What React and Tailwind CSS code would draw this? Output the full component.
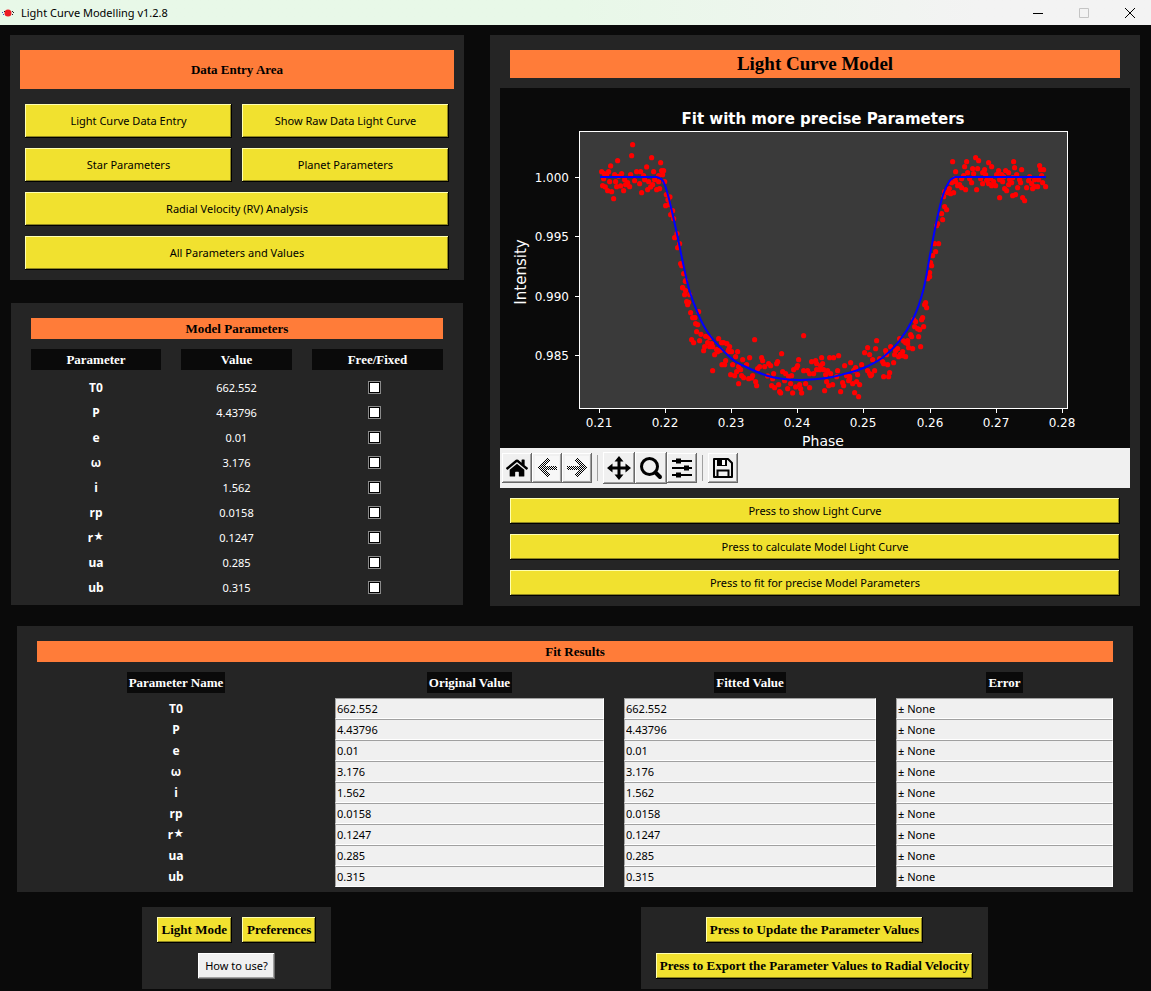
import React, { useState } from "react";
import { FaHome } from "react-icons/fa";

const RAISED_YELLOW =
  "bg-[#f1e12f] text-black shadow-[inset_-1px_-1px_0_#000,inset_1px_1px_0_#ffffb0,inset_-2px_-2px_0_#8f861f]";
const RAISED_GREY =
  "bg-[#f0f0f0] text-black shadow-[inset_-1px_-1px_0_#696969,inset_1px_1px_0_#ffffff,inset_-2px_-2px_0_#a0a0a0]";
const SERIF = "font-['Liberation_Serif',serif] font-bold";

const parameters = [
  ["T0", "662.552"],
  ["P", "4.43796"],
  ["e", "0.01"],
  ["ω", "3.176"],
  ["i", "1.562"],
  ["rp", "0.0158"],
  ["r⋆", "0.1247"],
  ["ua", "0.285"],
  ["ub", "0.315"],
];

// Observed samples, grouped by plot quadrant: origin in plot units, then x,y pairs in thirds of a unit.
const samples = [
  {
    origin: [0, 2],
    points:
      "397,163 394,196 352,211 331,227 454,202 481,217 439,230 304,244 325,244 409,244 421,244 460,244 484,241 490,241 343,253 364,250 391,253 310,265 328,274 346,274 307,286 315,290 322,301 334,304 340,325 349,289 361,287 370,301 376,283 388,289 382,277 403,271 418,280 424,307 433,268 442,298 451,290 457,283 469,298 478,295 475,274 493,274 463,268 445,274 430,256 487,253 475,256 319,253 355,258 373,268 312,250 498,313 509,320 503,328 496,346 505,343 517,361 511,373 520,385 530,430 523,442 538,460 532,472 541,520 544,526 550,550 556,571 547,592",
  },
  {
    origin: [300, 2],
    points:
      "457,214 466,244 499,214 493,229 526,202 535,211 517,235 532,235 565,217 574,229 553,238 502,247 520,250 547,247 490,256 508,265 514,277 484,265 472,286 478,283 484,292 496,298 529,298 466,274 454,277 447,295 460,307 451,310 442,307 433,304 430,319 433,349 439,358 424,370 427,388 412,400 409,406 403,460 415,460 406,484 397,496 391,517 394,526 388,547 388,559 382,565 595,241 589,253 616,241 625,247 640,214 643,232 664,238 649,253 637,262 658,268 661,277 607,274 598,268 586,286 574,286 565,280 559,270 547,280 541,265 556,253 571,265 580,274 604,253 613,295 619,301 625,283 634,277 598,322 637,316 646,313 667,322 673,331 652,292 679,292 688,259 685,271 694,280 697,295 703,289 712,289 703,268 715,268 724,256 718,226 721,238 730,238 727,277 736,289 628,268 610,259 464,264",
  },
  {
    origin: [60, 192],
    points:
      "375,3 367,22 376,31 373,43 388,43 379,64 385,66 382,73 391,97 415,94 397,112 404,112 406,130 412,133 409,154 422,162 394,178 400,187 418,181 436,168 433,199 430,211 448,172 442,187 448,199 457,199 463,223 475,175 484,187 490,187 500,190 508,199 472,214 481,210 469,208 454,190 514,214 532,214 526,229 505,208 503,214 457,271 496,241 485,253 493,253 517,253 547,238 568,232 541,268 535,259 529,274 511,283 523,286 535,310 544,286 550,292 559,253 565,295 577,286 574,293 586,304 589,316 583,178 604,232 607,241 598,259 592,265 613,259 625,250 631,256 622,287 637,295 640,280 634,316 643,322 655,313 652,244 649,250 664,220 658,334 661,338 667,274 676,280 673,301 682,325 691,310 697,338 706,320 685,289 694,286 700,268 712,256 709,262 715,238 730,166 718,313 721,325 724,338 730,271 736,310 748,322 742,271 748,280 754,244 760,280 766,241 769,250 784,232 787,250 778,268 769,268 781,256 790,268 802,271 796,283 808,232 820,232 835,226 799,304 793,331 805,316 817,313 811,280 832,271 829,289 841,334 847,307 850,316 853,256 871,247 859,286 868,295 865,301 877,310 883,337 889,304 895,349 892,283 883,268 880,271 898,313",
  },
  {
    origin: [320, 192],
    points:
      "124,253 133,217 142,202 148,223 166,205 169,181 157,238 142,271 148,280 154,283 151,286 163,271 190,289 205,289 208,277 178,235 190,250 202,253 187,244 196,211 211,199 220,247 223,223 235,229 232,205 238,175 247,214 256,229 247,226 256,187 262,181 265,202 277,205 271,163 274,169 301,199 295,169 283,139 286,124 292,145 298,148 310,139 304,118 307,112 313,73 316,67 319,82 280,118 250,182 262,190 226,211 240,222 199,223 88,289 106,262",
  },
];

const dots = samples.flatMap(({ origin, points }) =>
  points.split(" ").map((pair) => {
    const [x, y] = pair.split(",").map(Number);
    return [origin[0] + x / 3 + 0.3, origin[1] + y / 3 + 0.3];
  }),
);

const model = [
  [100, 89], [157, 89], [163, 93], [168.5, 109], [177, 146], [183, 175], [189.3, 202],
  [197.5, 224.5], [208.5, 245.5], [230.5, 269.7], [244, 278], [267, 287.7], [284, 291], [301, 292], [327, 290],
  [346, 285.5], [363.5, 280], [382, 270], [398.5, 254], [413.5, 230], [423.3, 202], [430, 167],
  [437, 131], [443, 107], [449.5, 93], [455, 89], [546, 89],
];

// Catmull-Rom spline between the straight out-of-transit segments.
function smooth(points) {
  const n = points.length;
  let d = `M${points[0]}L${points[1]}`;
  for (let i = 1; i < n - 2; i++) {
    const p0 = i === 1 ? points[1] : points[i - 1];
    const p1 = points[i];
    const p2 = points[i + 1];
    const p3 = i === n - 3 ? points[i + 1] : points[i + 2];
    const c1 = [p1[0] + (p2[0] - p0[0]) / 6, p1[1] + (p2[1] - p0[1]) / 6];
    const c2 = [p2[0] - (p3[0] - p1[0]) / 6, p2[1] - (p3[1] - p1[1]) / 6];
    d += `C${c1} ${c2} ${p2}`;
  }
  return `${d}L${points[n - 1]}`;
}

const xTicks = [
  [99.5, "0.21"], [165.5, "0.22"], [231.5, "0.23"], [297.5, "0.24"],
  [363.5, "0.25"], [430.5, "0.26"], [496.5, "0.27"], [562.5, "0.28"],
];
const yTicks = [[89.5, "1.000"], [148.5, "0.995"], [208.5, "0.990"], [267.5, "0.985"]];

function Plot() {
  return (
    <svg
      viewBox="0 0 630 360"
      className="block w-full overflow-visible bg-[#0a0a0a] font-['DejaVu_Sans',sans-serif]"
      role="img"
      aria-label="Fit with more precise Parameters"
    >
      <rect x="79.5" y="43.5" width="488" height="277" fill="#3a3a3a" />
      <g fill="#ff0000">
        {dots.map(([x, y], i) => (
          <circle key={i} cx={x} cy={y} r="2.6" />
        ))}
      </g>
      <path d={smooth(model)} fill="none" stroke="#0000ff" strokeWidth="2" />
      <rect x="79.5" y="43.5" width="488" height="277" fill="none" stroke="#fff" />
      <g fill="#fff" fontSize="12">
        {xTicks.map(([x, label]) => (
          <g key={label}>
            <path d={`M${x} 321v4`} stroke="#fff" />
            <text x={x - 0.5} y="339" textAnchor="middle">{label}</text>
          </g>
        ))}
        {yTicks.map(([y, label]) => (
          <g key={label}>
            <path d={`M75 ${y}h4`} stroke="#fff" />
            <text x="69" y={y + 4} textAnchor="end">{label}</text>
          </g>
        ))}
      </g>
      <text x="323" y="36" textAnchor="middle" fontSize="15" fontWeight="bold" fill="#fff">
        Fit with more precise Parameters
      </text>
      <text x="323" y="358" textAnchor="middle" fontSize="14" fill="#fff">Phase</text>
      <text transform="translate(26 184) rotate(-90)" textAnchor="middle" fontSize="15" fill="#fff">
        Intensity
      </text>
    </svg>
  );
}

function DitheredArrow({ id, flip }) {
  return (
    <svg viewBox="0 0 24 24" className="size-6 bg-[#f7f7f7]" shapeRendering="crispEdges" aria-hidden="true">
      <defs>
        <pattern id={id} width="2" height="2" patternUnits="userSpaceOnUse">
          <rect width="1" height="1" fill="#000" />
          <rect x="1" y="1" width="1" height="1" fill="#000" />
        </pattern>
      </defs>
      <path
        d={flip ? "M12 2 22 12 12 22 9 19l5-5H2v-4h12L9 5z" : "M12 2 2 12l10 10 3-3-5-5h12v-4H10l5-5z"}
        fill={`url(#${id})`}
      />
    </svg>
  );
}

function PanIcon() {
  return (
    <svg viewBox="0 0 24 24" className="size-6" aria-hidden="true">
      <path d="M4 12h16M12 4v16" stroke="#000" strokeWidth="3" />
      <path d="M12 0 16.500 5.500h-9zM12 24l4.500-5.500h-9zM0 12l5.500-4.500v9zM24 12l-5.500-4.500v9z" />
    </svg>
  );
}

function SearchIcon() {
  return (
    <svg viewBox="0 0 24 24" className="size-6" fill="none" stroke="#000" aria-hidden="true">
      <circle cx="10.5" cy="10.5" r="8" strokeWidth="3" />
      <path d="m16.500 16.500 4.500 4.500" strokeWidth="4" strokeLinecap="round" />
    </svg>
  );
}

function SlidersIcon() {
  return (
    <svg viewBox="0 0 24 24" className="size-6" aria-hidden="true">
      <path d="M2 5h20M2 12h20M2 19h20" stroke="#000" strokeWidth="2" />
      <path d="M6 2.500h5v5H6zM14 9.500h5v5h-5zM6 16.500h5v5H6z" />
    </svg>
  );
}

function SaveIcon() {
  return (
    <svg viewBox="0 0 24 24" className="size-6" fill="none" stroke="#000" strokeWidth="2" aria-hidden="true">
      <path d="M3 3h14l4 4v14H3z" strokeLinejoin="round" />
      <path d="M6.500 21v-6.500h11V21" />
      <path d="M15 3v7" />
      <path d="M6 3h9v7H6z" fill="#000" stroke="none" />
      <path d="M11 4h3v5h-3z" fill="#fff" stroke="none" />
    </svg>
  );
}

function Tool({ label, large, disabled, children }) {
  return (
    <button
      type="button"
      aria-label={label}
      title={label}
      disabled={disabled}
      className={`flex items-center justify-center ${large ? "size-8" : "size-[30px]"} ${RAISED_GREY}`}
    >
      {children}
    </button>
  );
}

function Toolbar() {
  return (
    <div className="flex h-10 items-center bg-[#f0f0f0] pl-[2px]">
      <Tool label="Home"><FaHome className="size-[22px]" /></Tool>
      <Tool label="Back" disabled><DitheredArrow id="back-dither" /></Tool>
      <Tool label="Forward" disabled><DitheredArrow id="forward-dither" flip /></Tool>
      <span className="mx-[5px] h-[26px] w-px bg-[#a0a0a0]" />
      <Tool label="Pan" large><PanIcon /></Tool>
      <Tool label="Zoom" large><SearchIcon /></Tool>
      <Tool label="Configure subplots"><SlidersIcon /></Tool>
      <span className="mx-[5px] h-[26px] w-px bg-[#a0a0a0]" />
      <Tool label="Save"><SaveIcon /></Tool>
    </div>
  );
}

function Banner({ className, children }) {
  return (
    <h2 className={`flex items-center justify-center bg-[#ff7c39] text-black ${SERIF} ${className}`}>{children}</h2>
  );
}

function Button({ className = "", children }) {
  return (
    <button type="button" className={`${RAISED_YELLOW} ${className}`}>{children}</button>
  );
}

function ParameterName({ name }) {
  if (!name.endsWith("⋆")) return name;
  return (
    <>
      {name.slice(0, -1)}
      <span className="text-[18px] leading-0">⋆</span>
    </>
  );
}

function TitleBar() {
  return (
    <header className="flex h-[25px] items-center bg-linear-to-r from-[#e8f8e8] from-50% to-[#f3f3f3] to-85% text-black">
      <svg viewBox="0 0 16 16" className="ml-[1px] size-4" aria-hidden="true">
        <circle cx="7" cy="8" r="3.500" fill="#ed1c24" />
        <path d="M1 7h1v1H1zM2 9h1v1H2z" fill="#3f48cc" />
        <path d="M3 6h1v1H3zM11 6h1v1h-1zM12 7h1v1h-1zM11 9h1v1h-1z" fill="#222" />
      </svg>
      <h1 className="ml-1 flex-1">Light Curve Modelling v1.2.8</h1>
      <div className="flex gap-[22px] pr-[9px]">
        <button type="button" aria-label="Minimize" className="flex size-6 items-center justify-center">
          <svg viewBox="0 0 10 10" className="size-[10px]"><path d="M0 5.500h10" stroke="#000" /></svg>
        </button>
        <button type="button" aria-label="Maximize" disabled className="flex size-6 items-center justify-center">
          <svg viewBox="0 0 10 10" className="size-[10px]"><path d="M.5.500h9v9h-9z" fill="none" stroke="#c4c4c4" /></svg>
        </button>
        <button type="button" aria-label="Close" className="flex size-6 items-center justify-center">
          <svg viewBox="0 0 10 10" className="size-[10px]"><path d="m0 0 10 10M10 0 0 10" stroke="#000" /></svg>
        </button>
      </div>
    </header>
  );
}

function DataEntry() {
  return (
    <section className="bg-[#252525] px-[10px] pt-[15px] pb-[10px]">
      <Banner className="h-[39px] text-[13px]">Data Entry Area</Banner>
      <div className="mt-[15px] grid grid-cols-2 gap-[10px] px-[5px]">
        <Button className="h-[34px]">Light Curve Data Entry</Button>
        <Button className="h-[34px]">Show Raw Data Light Curve</Button>
        <Button className="h-[34px]">Star Parameters</Button>
        <Button className="h-[34px]">Planet Parameters</Button>
        <Button className="col-span-2 h-[34px]">Radial Velocity (RV) Analysis</Button>
        <Button className="col-span-2 h-[34px]">All Parameters and Values</Button>
      </div>
    </section>
  );
}

function ModelParameters() {
  const [fixed, setFixed] = useState({});
  const head = `flex h-[21px] items-center justify-center bg-[#0a0a0a] ${SERIF} text-[13px]`;
  return (
    <section className="mx-px bg-[#252525] px-[10px] pt-[15px] pb-[5px] text-white">
      <Banner className="mx-[10px] h-[21px] text-[13px]">Model Parameters</Banner>
      <table className="mt-[10px] w-full table-fixed text-center">
        <thead>
          <tr>
            <th className="w-[150px] px-[10px] pt-0 pb-[5px]"><div className={head}>Parameter</div></th>
            <th className="w-[131px] px-[10px] pt-0 pb-[5px]"><div className={head}>Value</div></th>
            <th className="w-[151px] px-[10px] pt-0 pb-[5px]"><div className={head}>Free/Fixed</div></th>
          </tr>
        </thead>
        <tbody>
          {parameters.map(([name, value]) => (
            <tr key={name} className="h-[25px]">
              <th scope="row" className="p-0 text-[12px] font-bold">
                <label htmlFor={`fix-${name}`}><ParameterName name={name} /></label>
              </th>
              <td className="p-0">{value}</td>
              <td className="p-0 pr-[6px]">
                <input
                  id={`fix-${name}`}
                  type="checkbox"
                  checked={!!fixed[name]}
                  onChange={(e) => setFixed({ ...fixed, [name]: e.target.checked })}
                  className="mx-auto block size-[13px] appearance-none border border-[#8a8a8a] bg-white shadow-[inset_0_0_0_1px_#000] checked:bg-[#ff7c39]"
                />
              </td>
            </tr>
          ))}
        </tbody>
      </table>
    </section>
  );
}

function LightCurve() {
  return (
    <section className="bg-[#252525] px-[10px] pt-[15px] pb-[10px]">
      <Banner className="mx-[10px] h-[28px] text-[19px]">Light Curve Model</Banner>
      <div className="mt-[10px]">
        <Plot />
        <Toolbar />
      </div>
      <div className="mt-[10px] flex flex-col gap-[10px] px-[10px]">
        <Button className="h-[26px]">Press to show Light Curve</Button>
        <Button className="h-[26px]">Press to calculate Model Light Curve</Button>
        <Button className="h-[26px]">Press to fit for precise Model Parameters</Button>
      </div>
    </section>
  );
}

function ResultField({ label, value }) {
  return (
    <input
      aria-label={label}
      defaultValue={value}
      className="block h-[21px] w-full border border-t-[#a0a0a0] border-r-white border-b-white border-l-[#a0a0a0] bg-[#f0f0f0] px-px text-black outline-none"
    />
  );
}

function FitResults() {
  const head = `inline-block h-[21px] bg-[#0a0a0a] px-[2px] align-top leading-[21px] ${SERIF} text-[13px]`;
  return (
    <section className="mt-5 mr-[18px] ml-[17px] bg-[#252525] px-[10px] pt-[15px] pb-[5px] text-white">
      <Banner className="mx-[10px] h-[21px] text-[13px]">Fit Results</Banner>
      <table className="mt-[10px] w-full table-fixed">
        <thead>
          <tr className="h-[26px] align-top">
            <th className="w-[298px] p-0"><span className={head}>Parameter Name</span></th>
            <th className="w-[289px] p-0"><span className={head}>Original Value</span></th>
            <th className="w-[272px] p-0"><span className={head}>Fitted Value</span></th>
            <th className="w-[237px] p-0"><span className={head}>Error</span></th>
          </tr>
        </thead>
        <tbody>
          {parameters.map(([name, value]) => (
            <tr key={name} className="h-[21px]">
              <th scope="row" className="p-0 text-[12px] leading-4 font-bold"><ParameterName name={name} /></th>
              <td className="px-[10px] py-0"><ResultField label={`${name} original value`} value={value} /></td>
              <td className="px-[10px] py-0"><ResultField label={`${name} fitted value`} value={value} /></td>
              <td className="px-[10px] py-0"><ResultField label={`${name} error`} value="± None" /></td>
            </tr>
          ))}
        </tbody>
      </table>
    </section>
  );
}

function Actions() {
  const box = "flex flex-col items-center gap-[10px] bg-[#252525] px-[15px] py-[10px]";
  const action = `h-[26px] ${SERIF} text-[13px]`;
  return (
    <footer className="mt-[15px] grid grid-cols-[453fr_673fr] justify-items-center gap-[15px] pb-[2px] pl-[10px]">
      <div className={box}>
        <div className="flex gap-[10px]">
          <Button className={`px-[5px] ${action}`}>Light Mode</Button>
          <Button className={`px-[5px] ${action}`}>Preferences</Button>
        </div>
        <button type="button" className={`h-[26px] px-[7px] ${RAISED_GREY}`}>How to use?</button>
      </div>
      <div className={box}>
        <Button className={`px-1 ${action}`}>Press to Update the Parameter Values</Button>
        <Button className={`px-1 ${action}`}>Press to Export the Parameter Values to Radial Velocity</Button>
      </div>
    </footer>
  );
}

export default function App() {
  return (
    <div className="min-h-screen bg-[#0a0a0a] font-['Noto_Sans','Open_Sans',sans-serif] text-[11px] leading-4">
      <TitleBar />
      <main>
        <div className="grid grid-cols-[454fr_650fr] items-start gap-[26px] pt-[10px] pr-[11px] pl-[10px]">
          <div className="flex flex-col gap-[23px]">
            <DataEntry />
            <ModelParameters />
          </div>
          <LightCurve />
        </div>
        <FitResults />
        <Actions />
      </main>
    </div>
  );
}
